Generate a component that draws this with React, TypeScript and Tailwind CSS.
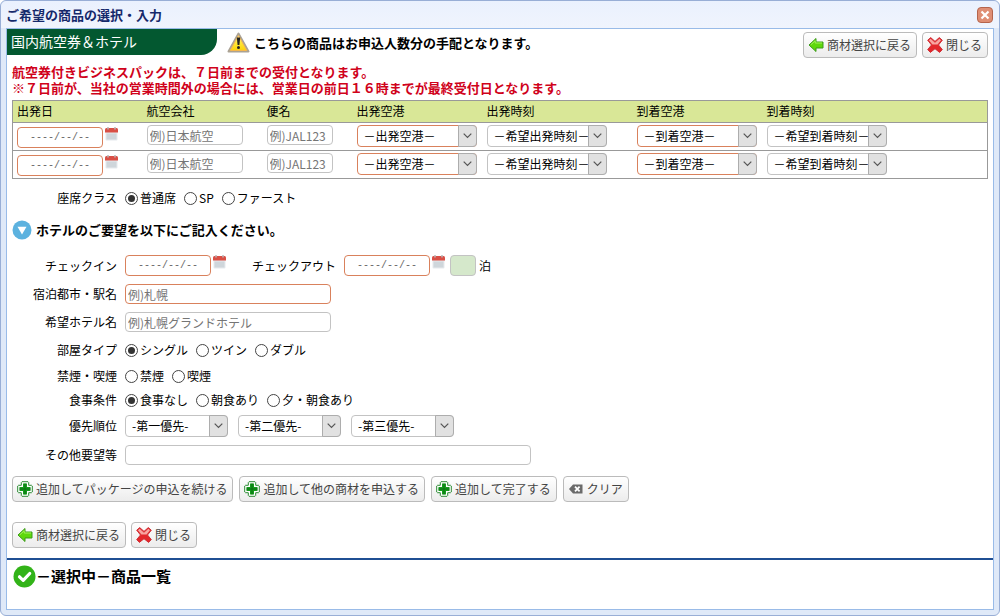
import { useState } from 'react'
import type { ReactNode } from 'react'

type Option = { value: string; label: string }

const airports = {
  dep: '－出発空港－',
  depTime: '－希望出発時刻－',
  arr: '－到着空港－',
  arrTime: '－希望到着時刻－',
}

const seatOptions: Option[] = [
  { value: 'normal', label: '普通席' },
  { value: 'sp', label: 'SP' },
  { value: 'first', label: 'ファースト' },
]
const roomOptions: Option[] = [
  { value: 'single', label: 'シングル' },
  { value: 'twin', label: 'ツイン' },
  { value: 'double', label: 'ダブル' },
]
const smokeOptions: Option[] = [
  { value: 'no', label: '禁煙' },
  { value: 'yes', label: '喫煙' },
]
const mealOptions: Option[] = [
  { value: 'none', label: '食事なし' },
  { value: 'morning', label: '朝食あり' },
  { value: 'both', label: '夕・朝食あり' },
]

const inputBase = 'h-5 rounded-sm border bg-white px-0.5 leading-4 placeholder-[#757575] outline-none'
const required = 'border-[#d9815c]'
const normal = 'border-[#c3c3c3]'

/* ---------- icons ---------- */

const WarningIcon = () => (
  <svg width="23" height="21" viewBox="0 0 23 21" className="shrink-0">
    <defs>
      <linearGradient id="warn" x1="0" y1="0" x2="0" y2="1">
        <stop offset="0" stopColor="#fff7b8" />
        <stop offset=".5" stopColor="#ffe93a" />
        <stop offset="1" stopColor="#fbd000" />
      </linearGradient>
    </defs>
    <path d="M11.5 1.5 21.5 19.5H1.5Z" fill="url(#warn)" stroke="#aaa294" strokeWidth="2" strokeLinejoin="round" />
    <path d="M11.5 3.5 19.7 18.4H3.3Z" fill="none" stroke="#f9b84e" strokeWidth="1" strokeLinejoin="round" />
    <path d="M9.800 5.500h3.400l-.8 7.500h-1.800Z" fill="#222" />
    <circle cx="11.5" cy="15.6" r="1.5" fill="#222" />
  </svg>
)

const ArrowIcon = () => (
  <svg width="16" height="16" viewBox="0 0 16 16" className="shrink-0">
    <path d="M1 8 8 1.5V5H15V11H8V14.5Z" fill="#5fd80c" stroke="#3c9b1a" strokeLinejoin="round" />
    <path d="M2.8 7.8 7.2 3.7V6H14" fill="none" stroke="#a5f25c" />
  </svg>
)

const CrossIcon = () => (
  <svg width="16" height="16" viewBox="0 0 16 16" className="shrink-0">
    <path
      d="M.7 3.200 3.700.6 8 4.400 12.300.6 15.300 3.200 11.500 8 15.300 12.600 12.600 15.400 8 11.700 3.400 15.400.7 12.600 4.500 8Z"
      fill="#e3272b"
      stroke="#cf2f35"
      strokeLinejoin="round"
    />
    <path d="M1.900 3.300 3.600 1.800 8 5.700 12.400 1.800 14 3.300 10.600 7.500H5.400Z" fill="#f7a5a1" />
  </svg>
)

const PlusIcon = () => (
  <svg width="16" height="16" viewBox="0 0 16 16" className="shrink-0">
    <path
      d="M5 .7H11L11.7 1.5V4.3H14.5L15.3 5V11L14.5 11.7H11.7V14.5L11 15.3H5L4.3 14.5V11.7H1.5L.7 11V5L1.5 4.3H4.3V1.5Z"
      fill="#fff"
      stroke="#2c8a34"
    />
    <path d="M6 2.5H10V6H13.5V10H10V13.5H6V10H2.5V6H6Z" fill="#149b1c" />
    <path d="M8 2.5V13.5M2.5 8H13.5" stroke="#087010" />
  </svg>
)

const ClearIcon = () => (
  <svg width="16" height="16" viewBox="0 0 16 16" className="shrink-0">
    <path d="M1 8 5 3.5H14.5V12.5H5Z" fill="#6b6b6b" />
    <path d="M7 5.7 11.6 10.3M11.6 5.7 7 10.3" stroke="#fff" strokeWidth="1.8" />
  </svg>
)

const CalendarIcon = () => (
  <svg width="13" height="14" viewBox="0 0 13 14" className="block">
    <rect x=".5" y="1.5" width="12" height="12" rx="1" fill="#e6eaed" />
    <rect x="1.5" y="6.5" width="10" height="6" fill="#cfd6db" />
    <path d="M0 5.500V2.500Q0 1 1.500 1H11.500Q13 1 13 2.500V5.500Z" fill="#d94f45" />
    <path d="M3 0V2.500M10 0V2.500" stroke="#b8b8b8" strokeWidth="1.500" />
  </svg>
)

const DownCircleIcon = () => (
  <svg width="20" height="20" viewBox="0 0 20 20" className="shrink-0">
    <circle cx="10" cy="10" r="9.500" fill="#5cb2df" />
    <path d="M5.500 6.800H14.500L10 14.500Z" fill="#fff" />
  </svg>
)

const CheckCircleIcon = () => (
  <svg width="23" height="23" viewBox="0 0 23 23" className="shrink-0">
    <circle cx="11.500" cy="11.500" r="11" fill="#32b318" />
    <path d="M6.500 11.800 10.200 15.300 16.700 8.500" fill="none" stroke="#fff" strokeWidth="3.200" strokeLinecap="round" strokeLinejoin="round" />
  </svg>
)

/* ---------- controls ---------- */

function ToolButton({ icon, children }: { icon: ReactNode; children: ReactNode }) {
  return (
    <button
      type="button"
      className="inline-flex h-[26px] items-center gap-[3px] rounded border border-[#bbb] bg-linear-to-b from-white to-[#ececec] pr-[5px] pl-1 whitespace-nowrap text-[#444] hover:to-[#ddd]"
    >
      {icon}
      {children}
    </button>
  )
}

function DateInput({ id, label }: { id?: string; label: string }) {
  return (
    <div className="flex items-start gap-0.5">
      <input
        id={id}
        aria-label={label}
        placeholder="----/--/--"
        className="h-[21px] w-[86px] rounded border border-[#d9815c] bg-white text-center font-['Liberation_Mono',monospace] text-[10px] placeholder-[#666] outline-none"
      />
      <button type="button" aria-label={`${label}カレンダー`}>
        <CalendarIcon />
      </button>
    </div>
  )
}

function Select({ label, text, width, border }: { label: string; text: string; width: string; border: string }) {
  return (
    <div className={`relative ${width}`}>
      <select aria-label={label} className={`block h-[22px] w-full appearance-none rounded border bg-white pl-[6px] outline-none ${border}`}>
        <option>{text}</option>
      </select>
      <span className="pointer-events-none absolute inset-y-0 right-0 flex w-[19px] items-center justify-center rounded-r-sm border border-[#adadad] bg-[#e1e1e1]">
        <svg width="9" height="6" viewBox="0 0 9 6">
          <path d="M.7.7 4.500 4.500 8.300.7" fill="none" stroke="#555" strokeWidth="1.200" />
        </svg>
      </span>
    </div>
  )
}

function RadioGroup({ name, options, initial }: { name: string; options: Option[]; initial?: string }) {
  const [value, setValue] = useState(initial)
  return (
    <div className="flex gap-2">
      {options.map((o) => (
        <label key={o.value} className="flex items-center gap-0.5">
          <input
            type="radio"
            name={name}
            value={o.value}
            checked={value === o.value}
            onChange={() => setValue(o.value)}
            className="size-[13px] appearance-none rounded-full border border-[#444] bg-white bg-clip-content p-0.5 checked:bg-[#333]"
          />
          {o.label}
        </label>
      ))}
    </div>
  )
}

function Row({ label, htmlFor, height = 'h-7', children }: { label: string; htmlFor?: string; height?: string; children: ReactNode }) {
  return (
    <div className={`flex items-center ${height}`}>
      {htmlFor ? (
        <label htmlFor={htmlFor} className="mr-2 w-[105px] shrink-0 text-right">{label}</label>
      ) : (
        <span className="mr-2 w-[105px] shrink-0 text-right">{label}</span>
      )}
      {children}
    </div>
  )
}

function FlightRow() {
  return (
    <tr className="border-t border-[#999]">
      <td className="h-7 pt-1 pl-1 align-top"><DateInput label="出発日" /></td>
      <td className="pt-0.5 pl-1 align-top">
        <input aria-label="航空会社" placeholder="例)日本航空" className={`w-24 ${inputBase} ${normal}`} />
      </td>
      <td className="pt-0.5 pl-1 align-top">
        <input aria-label="便名" placeholder="例)JAL123" className={`w-[66px] ${inputBase} ${normal}`} />
      </td>
      <td className="pt-0.5 pl-1 align-top"><Select label="出発空港" text={airports.dep} width="w-[120px]" border={required} /></td>
      <td className="pt-0.5 pl-1 align-top"><Select label="出発時刻" text={airports.depTime} width="w-[120px]" border={normal} /></td>
      <td className="pt-0.5 pl-1 align-top"><Select label="到着空港" text={airports.arr} width="w-[120px]" border={required} /></td>
      <td className="pt-0.5 pl-1 align-top"><Select label="到着時刻" text={airports.arrTime} width="w-[120px]" border={normal} /></td>
    </tr>
  )
}

export default function App() {
  return (
    <div className="flex min-h-screen flex-col rounded-md border border-[#98aed6] bg-[#dfe9f8] px-[5px] pb-[5px] font-['Noto_Sans_CJK_JP',sans-serif] text-xs text-black">
      <header className="-mx-[5px] flex h-[27px] items-center justify-between rounded-t-md bg-linear-to-b from-[#eaf1fe] to-[#f0f4fd] px-[5px]">
        <h1 className="text-[13px] leading-6 font-bold text-[#15296b]">ご希望の商品の選択・入力</h1>
        <button type="button" aria-label="閉じる" className="mr-px flex size-4 items-center justify-center rounded-sm border border-[#b5644c] bg-[#df8e74]">
          <svg width="10" height="10" viewBox="0 0 10 10">
            <path d="M1.500 1.500 8.500 8.500M8.500 1.500 1.500 8.500" stroke="#fff" strokeWidth="2.200" />
          </svg>
        </button>
      </header>

      <main className="flex-1 border border-[#99bbe8] bg-white">
        <div className="flex h-[35px] items-start pr-[5px]">
          <h2 className="h-[26px] w-[210px] rounded-br-2xl bg-[#035830] pl-1 text-sm leading-6 text-white">国内航空券＆ホテル</h2>
          <p className="flex items-center gap-1 pt-[3px] pl-2.5 text-[13px] font-bold">
            <WarningIcon />
            こちらの商品はお申込人数分の手配となります。
          </p>
          <div className="ml-auto flex gap-[5px] pt-[3px]">
            <ToolButton icon={<ArrowIcon />}>商材選択に戻る</ToolButton>
            <ToolButton icon={<CrossIcon />}>閉じる</ToolButton>
          </div>
        </div>

        <div className="px-[5px]">
          <div className="text-[13px] leading-4 font-bold text-[#d0021b]">
            <p>航空券付きビジネスパックは、７日前までの受付となります。</p>
            <p>※７日前が、当社の営業時間外の場合には、営業日の前日１６時までが最終受付日となります。</p>
          </div>

          <table className="mt-1 w-full table-fixed border-collapse border border-[#999]">
            <colgroup>
              <col className="w-[130px]" />
              <col className="w-[120px]" />
              <col className="w-[90px]" />
              <col className="w-[130px]" />
              <col className="w-[150px]" />
              <col className="w-[130px]" />
              <col />
            </colgroup>
            <thead className="bg-[#d9e797]">
              <tr className="text-left">
                {['出発日', '航空会社', '便名', '出発空港', '出発時刻', '到着空港', '到着時刻'].map((h) => (
                  <th key={h} scope="col" className="h-[22px] pb-0.5 pl-1 font-normal">{h}</th>
                ))}
              </tr>
            </thead>
            <tbody>
              <FlightRow />
              <FlightRow />
            </tbody>
          </table>

          <div className="mt-[7px]">
            <Row label="座席クラス" height="h-6">
              <RadioGroup name="seat" options={seatOptions} initial="normal" />
            </Row>
          </div>

          <h3 className="mt-1 mb-[5px] flex h-8 items-center gap-1 text-[13px] font-bold">
            <DownCircleIcon />
            ホテルのご要望を以下にご記入ください。
          </h3>

          <Row label="チェックイン" htmlFor="checkin" height="h-[29px]">
            <DateInput id="checkin" label="チェックイン" />
            <label htmlFor="checkout" className="mr-2 ml-[26px]">チェックアウト</label>
            <DateInput id="checkout" label="チェックアウト" />
            <input id="nights" readOnly className="mr-[3px] ml-[5px] h-[21px] w-[26px] rounded border border-[#c3c3c3] bg-[#d5e8cb]" />
            <label htmlFor="nights">泊</label>
          </Row>
          <Row label="宿泊都市・駅名" htmlFor="city">
            <input id="city" placeholder="例)札幌" className={`w-[206px] ${inputBase} ${required}`} />
          </Row>
          <Row label="希望ホテル名" htmlFor="hotel">
            <input id="hotel" placeholder="例)札幌グランドホテル" className={`w-[206px] ${inputBase} ${normal}`} />
          </Row>
          <Row label="部屋タイプ">
            <RadioGroup name="room" options={roomOptions} initial="single" />
          </Row>
          <Row label="禁煙・喫煙" height="h-6">
            <RadioGroup name="smoke" options={smokeOptions} />
          </Row>
          <Row label="食事条件" height="h-6">
            <RadioGroup name="meal" options={mealOptions} initial="none" />
          </Row>
          <Row label="優先順位">
            <div className="flex gap-2.5">
              <Select label="第一優先" text="-第一優先-" width="w-[103px]" border={normal} />
              <Select label="第二優先" text="-第二優先-" width="w-[103px]" border={normal} />
              <Select label="第三優先" text="-第三優先-" width="w-[103px]" border={normal} />
            </div>
          </Row>
          <Row label="その他要望等" htmlFor="other" height="h-[29px]">
            <input id="other" className={`w-[406px] ${inputBase} ${normal}`} />
          </Row>

          <div className="mt-[7px] flex flex-wrap gap-[6px]">
            <ToolButton icon={<PlusIcon />}>追加してパッケージの申込を続ける</ToolButton>
            <ToolButton icon={<PlusIcon />}>追加して他の商材を申込する</ToolButton>
            <ToolButton icon={<PlusIcon />}>追加して完了する</ToolButton>
            <ToolButton icon={<ClearIcon />}>クリア</ToolButton>
          </div>
          <div className="mt-5 flex gap-[5px]">
            <ToolButton icon={<ArrowIcon />}>商材選択に戻る</ToolButton>
            <ToolButton icon={<CrossIcon />}>閉じる</ToolButton>
          </div>
        </div>

        <section className="mt-2.5 border-t-2 border-[#1f4f93] px-1.5 pt-1">
          <h3 className="flex items-center text-[15px] leading-6 font-bold">
            <CheckCircleIcon />
            －選択中－商品一覧
          </h3>
        </section>
      </main>
    </div>
  )
}
